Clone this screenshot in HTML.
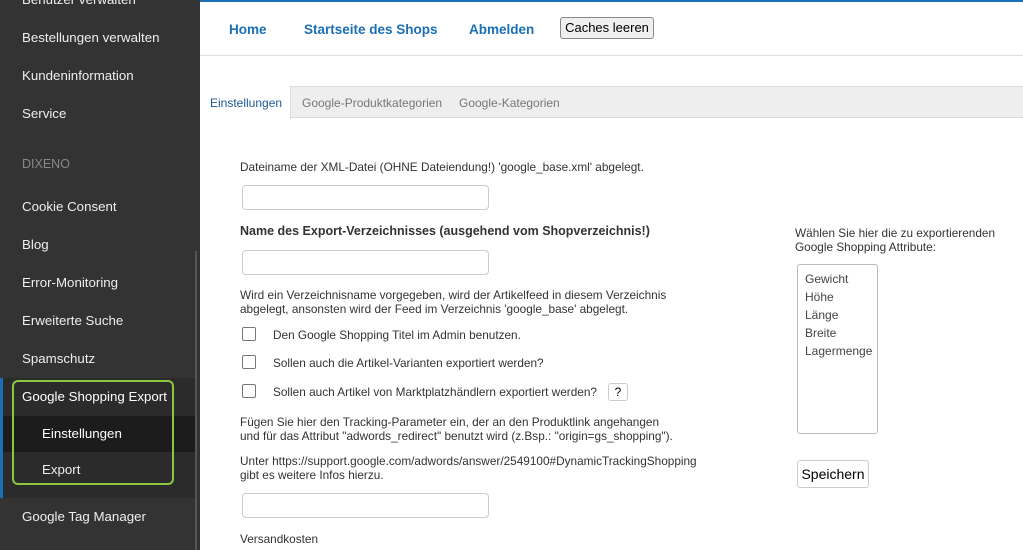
<!DOCTYPE html>
<html><head><meta charset="utf-8"><style>
*{margin:0;padding:0;box-sizing:border-box}
body{width:1023px;height:550px;overflow:hidden;position:relative;background:#fff;font-family:"Liberation Sans",Arial,sans-serif}
#sb{position:absolute;left:0;top:0;width:200px;height:550px;background:#333;color:#eee;font-size:13.3px}
#sb .it{position:absolute;left:22px}
#sb .sub{position:absolute;left:42px}
.t{position:absolute;font-size:11.8px;color:#333}
.inp{position:absolute;left:242px;width:247px;height:25px;border:1px solid #ccc;border-radius:4px;background:#fff}
.cb{position:absolute;left:242px;width:14px;height:14px;border:1.5px solid #777;border-radius:2px;background:#fff}
a{color:#1a6fb5;font-weight:bold;font-size:13.5px;text-decoration:none;position:absolute;top:22px}
</style></head><body>
<div id="sb">
<div class="it" style="top:-8px">Benutzer verwalten</div>
<div class="it" style="top:30px">Bestellungen verwalten</div>
<div class="it" style="top:68px">Kundeninformation</div>
<div class="it" style="top:106px">Service</div>
<div class="it" style="top:157px;color:#888;font-size:12.5px">DIXENO</div>
<div class="it" style="top:199px">Cookie Consent</div>
<div class="it" style="top:237px">Blog</div>
<div class="it" style="top:275px">Error-Monitoring</div>
<div class="it" style="top:313px">Erweiterte Suche</div>
<div class="it" style="top:351px">Spamschutz</div>
<div style="position:absolute;left:0;top:378px;width:196px;height:120px;background:#2b2b2b"></div>
<div style="position:absolute;left:0;top:416px;width:196px;height:36px;background:#1c1c1c"></div>
<div style="position:absolute;left:0;top:378px;width:3px;height:120px;background:#1a6fb5"></div>
<div style="position:absolute;left:12px;top:380px;width:162px;height:105px;border:2px solid #8dc63f;border-radius:6px"></div>
<div class="it" style="top:389px;color:#fff">Google Shopping Export</div>
<div class="sub" style="top:426px;color:#fff">Einstellungen</div>
<div class="sub" style="top:462px">Export</div>
<div class="it" style="top:509px">Google Tag Manager</div>
<div style="position:absolute;left:195px;top:251px;width:2px;height:299px;background:#555"></div>
</div>
<div style="position:absolute;left:200px;top:0;width:823px;height:2px;background:#1a6fb5"></div>
<a style="left:229px">Home</a><a style="left:304px">Startseite des Shops</a><a style="left:469px">Abmelden</a>
<div style="position:absolute;left:560px;top:17px;width:94px;height:22px;border:1px solid #888;border-radius:3px;background:#efefef;font-size:13px;text-align:center;line-height:20px">Caches leeren</div>
<div style="position:absolute;left:200px;top:55px;width:823px;height:1px;background:#ddd"></div>
<div style="position:absolute;left:200px;top:86px;width:823px;height:32px;background:#eee;border-top:1px solid #ddd;border-bottom:1px solid #ddd;font-size:12px;color:#777">
<div style="position:absolute;left:0;top:-1px;width:91px;height:33px;background:#fff;border-right:1px solid #ddd;color:#1a5a96;padding:10px 0 0 10px">Einstellungen</div>
<div style="position:absolute;left:102px;top:9px">Google-Produktkategorien</div>
<div style="position:absolute;left:259px;top:9px">Google-Kategorien</div>
</div>
<div class="t" style="left:240px;top:160px">Dateiname der XML-Datei (OHNE Dateiendung!) 'google_base.xml' abgelegt.</div>
<div class="inp" style="top:185px"></div>
<div class="t" style="left:240px;top:224px;font-weight:bold;font-size:12.5px">Name des Export-Verzeichnisses (ausgehend vom Shopverzeichnis!)</div>
<div class="inp" style="top:250px"></div>
<div class="t" style="left:240px;top:288px;line-height:14px">Wird ein Verzeichnisname vorgegeben, wird der Artikelfeed in diesem Verzeichnis<br>abgelegt, ansonsten wird der Feed im Verzeichnis 'google_base' abgelegt.</div>
<div class="cb" style="top:327px"></div><div class="t" style="left:273px;top:328px">Den Google Shopping Titel im Admin benutzen.</div>
<div class="cb" style="top:355px"></div><div class="t" style="left:273px;top:356px">Sollen auch die Artikel-Varianten exportiert werden?</div>
<div class="cb" style="top:384px"></div><div class="t" style="left:273px;top:385px">Sollen auch Artikel von Marktplatzhändlern exportiert werden?</div>
<div style="position:absolute;left:608px;top:383px;width:20px;height:18px;border:1px solid #ccc;border-radius:3px;font-size:12px;text-align:center;line-height:16px">?</div>
<div class="t" style="left:240px;top:415px;line-height:14px">Fügen Sie hier den Tracking-Parameter ein, der an den Produktlink angehangen<br>und für das Attribut "adwords_redirect" benutzt wird (z.Bsp.: "origin=gs_shopping").</div>
<div class="t" style="left:240px;top:454px;line-height:14px">Unter https://support.google.com/adwords/answer/2549100#DynamicTrackingShopping<br>gibt es weitere Infos hierzu.</div>
<div class="inp" style="top:493px"></div>
<div class="t" style="left:240px;top:532px">Versandkosten</div>
<div class="t" style="left:795px;top:226px;line-height:14px">Wählen Sie hier die zu exportierenden<br>Google Shopping Attribute:</div>
<div style="position:absolute;left:797px;top:264px;width:81px;height:170px;border:1px solid #bbb;border-radius:3px;padding:5px 0 0 7px;font-size:12px;color:#444;line-height:18px">Gewicht<br>Höhe<br>Länge<br>Breite<br>Lagermenge</div>
<div style="position:absolute;left:797px;top:460px;width:72px;height:28px;border:1px solid #ccc;border-radius:3px;font-size:14px;text-align:center;line-height:26px">Speichern</div>
</body></html>
